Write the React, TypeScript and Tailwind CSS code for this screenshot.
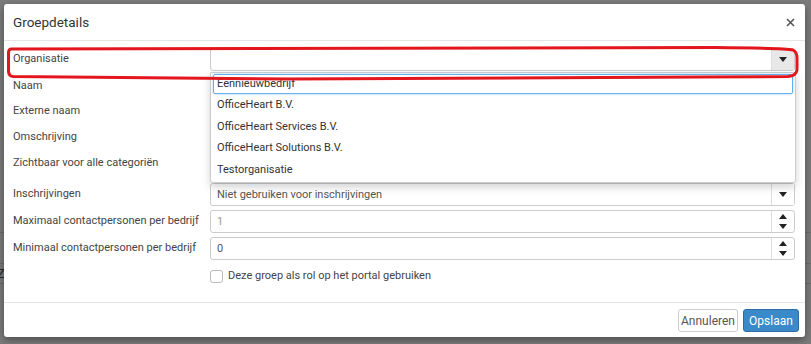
const options = [
  "OfficeHeart B.V.",
  "OfficeHeart Services B.V.",
  "OfficeHeart Solutions B.V.",
  "Testorganisatie",
];

function Caret({ up = false }: { up?: boolean }) {
  return (
    <svg width="8" height="5" viewBox="0 0 8 5" className="block">
      {up ? <path d="M0 5 L4 0 L8 5 Z" fill="#222" /> : <path d="M0 0 L8 0 L4 5 Z" fill="#222" />}
    </svg>
  );
}

function SelectBox({ value, open = false }: { value?: string; open?: boolean }) {
  return (
    <div className="flex h-[23px] w-full border border-[#ccc] rounded-[3px] bg-white">
      <div className="flex-1 px-[6px] text-[11px] leading-[21px] text-[#555] truncate">{value}</div>
      <div
        className={`w-[23px] flex items-center justify-center border-l border-[#ddd] ${
          open ? "bg-[#e8e8e8]" : "bg-white"
        }`}
      >
        <Caret />
      </div>
    </div>
  );
}

function NumberBox({ value, muted = false }: { value: string; muted?: boolean }) {
  return (
    <div className="flex h-[23px] w-full border border-[#ccc] rounded-[3px] bg-white">
      <div className={`flex-1 px-[6px] text-[11px] leading-[21px] ${muted ? "text-[#999]" : "text-[#555]"}`}>
        {value}
      </div>
      <div className="w-[23px] flex flex-col items-center justify-center gap-[5px] border-l border-[#ddd]">
        <Caret up />
        <Caret />
      </div>
    </div>
  );
}

function Row({ label, h, children }: { label: string; h: string; children?: React.ReactNode }) {
  return (
    <div className={`flex items-start ${h}`}>
      <div className="w-[197px] whitespace-nowrap text-[11px] leading-[22px] text-[#444]">{label}</div>
      <div className="flex-1">{children}</div>
    </div>
  );
}

export default function App() {
  return (
    <div className="relative w-[811px] h-[344px] overflow-hidden bg-[#7c7c7c] font-['Roboto',sans-serif]">
      {/* dimmed page behind the dialog */}
      <div className="pt-[232px] flex flex-col">
        <div className="h-[31px] border-t border-[#6c6c6c]" />
        <div className="h-[20px] border-t border-[#6c6c6c] text-[13px] leading-[20px] text-[#2a2a2a] -ml-[3px]">Z</div>
        <div className="h-[30px] border-t border-[#6c6c6c]" />
      </div>

      {/* dialog */}
      <div className="absolute left-[4px] top-[4px] w-[801px] h-[333px] bg-white rounded-[3px] shadow-[0_3px_9px_rgba(0,0,0,0.4)] flex flex-col">
        <div className="h-[37px] shrink-0 flex items-center justify-between pl-[9px] pr-[10px] border-b border-[#e5e5e5]">
          <span className="text-[13.5px] text-[#333]">Groepdetails</span>
          <svg width="9" height="9" viewBox="0 0 9 9">
            <path d="M1 1 L8 8 M8 1 L1 8" stroke="#555" strokeWidth="1.6" />
          </svg>
        </div>

        <div className="relative flex-1 pl-[9px] pr-[10px] pt-[7px]">
          <Row label="Organisatie" h="h-[27px]">
            <SelectBox open />
          </Row>
          <Row label="Naam" h="h-[25px]" />
          <Row label="Externe naam" h="h-[26px]" />
          <Row label="Omschrijving" h="h-[26px]" />
          <Row label="Zichtbaar voor alle categoriën" h="h-[31px]" />
          <Row label="Inschrijvingen" h="h-[27px]">
            <SelectBox value="Niet gebruiken voor inschrijvingen" />
          </Row>
          <Row label="Maximaal contactpersonen per bedrijf" h="h-[27px]">
            <NumberBox value="1" muted />
          </Row>
          <Row label="Minimaal contactpersonen per bedrijf" h="h-[29px]">
            <NumberBox value="0" />
          </Row>
          <div className="flex items-center gap-[5px] pl-[197px] pt-[2px]">
            <div className="w-[13px] h-[13px] border border-[#bbb] rounded-[3px] bg-white" />
            <span className="text-[11px] text-[#444]">Deze groep als rol op het portal gebruiken</span>
          </div>

          {/* open dropdown of Organisatie */}
          <div className="absolute left-[206px] top-[31px] w-[586px] h-[111px] bg-white border border-[#ccc] rounded-b-[3px] shadow-[0_4px_8px_rgba(0,0,0,0.18)] px-[2px] pt-[1px]">
            <div className="h-[20px] border border-[#66afe9] rounded-[2px] shadow-[0_0_3px_rgba(102,175,233,0.6)] px-[3px] text-[11px] leading-[18px] text-[#333]">
              Eennieuwbedrijf
            </div>
            {options.map((o) => (
              <div key={o} className="h-[21.5px] px-[4px] text-[11px] leading-[21.5px] text-[#333]">
                {o}
              </div>
            ))}
          </div>
        </div>

        <div className="h-[35px] shrink-0 border-t border-[#e5e5e5] flex justify-end items-start gap-[5px] pt-[6px] pr-[6px]">
          <button className="h-[23px] w-[60px] border border-[#ccc] rounded-[3px] bg-white text-[12px] text-[#555]">
            Annuleren
          </button>
          <button className="h-[23px] w-[56px] border border-[#2e6da4] rounded-[3px] bg-[#3a89c9] text-[12px] text-white">
            Opslaan
          </button>
        </div>
      </div>

      {/* red hand-drawn highlight */}
      <svg className="absolute inset-0 pointer-events-none" width="811" height="344" viewBox="0 0 811 344">
        <path
          d="M11 49 L715 47.5 Q785 48 793 50 Q797 52 797 58 L797 70 Q796 76 788 76.5 L700 77 L290 79 L13 76.5 Q8.5 76 8.5 71 L8.5 53 Q8.5 49.5 11 49 Z"
          fill="none"
          stroke="#e3161e"
          strokeWidth="3"
        />
      </svg>
    </div>
  );
}
